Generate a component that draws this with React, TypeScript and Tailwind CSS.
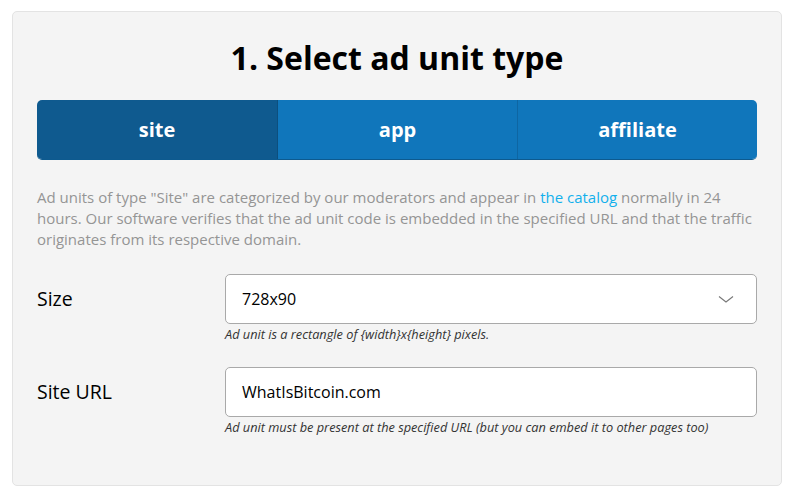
const font = { fontFamily: '"Open Sans", "Noto Sans", sans-serif' };

function Field({
  label,
  value,
  hint,
  select,
}: {
  label: string;
  value: string;
  hint: string;
  select?: boolean;
}) {
  return (
    <div className="grid grid-cols-[188px_1fr]">
      <div className="flex h-[50px] items-center text-[19.5px] text-black">{label}</div>
      <div>
        <div className="flex h-[50px] items-center justify-between rounded-[5px] border border-[#a9a9a9] bg-white pl-[16px] pr-[22px] text-[16px] text-black">
          <span>{value}</span>
          {select && (
            <svg width="16" height="9" viewBox="0 0 16 9" fill="none" stroke="#777" strokeWidth="1.1">
              <path d="M1 1.5l7 5.5 7-5.5" />
            </svg>
          )}
        </div>
        <p className="mt-[2px] text-[12.75px] italic leading-[16px] text-[#333]">{hint}</p>
      </div>
    </div>
  );
}

export default function App() {
  return (
    <div className="min-h-[496px] bg-white pl-[12px] pt-[11px]" style={font}>
      <div className="h-[475px] w-[770px] rounded-[5px] border border-[#e3e3e3] bg-[#f4f4f4] px-[24px]">
        <h1 className="pt-[26px] text-center text-[32px] font-bold leading-[40px] text-black">
          1. Select ad unit type
        </h1>

        <div className="mt-[22px] grid h-[60px] grid-cols-3 overflow-hidden rounded-[5px] border-b border-[#0d5a8f] text-[20px] font-bold text-white">
          <div className="flex items-center justify-center bg-[#0f5a8f]">site</div>
          <div className="flex items-center justify-center border-l border-[#0c4f7e] bg-[#1076bb]">app</div>
          <div className="flex items-center justify-center border-l border-[#0e66a3] bg-[#1076bb]">affiliate</div>
        </div>

        <p className="mt-[27px] text-[15px] leading-[21px] text-[#959595]">
          Ad units of type "Site" are categorized by our moderators and appear in{' '}
          <a className="text-[#12b0ec]">the catalog</a> normally in 24 hours. Our software verifies that the ad unit
          code is embedded in the specified URL and that the traffic originates from its respective domain.
        </p>

        <div className="mt-[24px] flex flex-col gap-[25px]">
          <Field label="Size" value="728x90" hint="Ad unit is a rectangle of {width}x{height} pixels." select />
          <Field
            label="Site URL"
            value="WhatIsBitcoin.com"
            hint="Ad unit must be present at the specified URL (but you can embed it to other pages too)"
          />
        </div>
      </div>
    </div>
  );
}
